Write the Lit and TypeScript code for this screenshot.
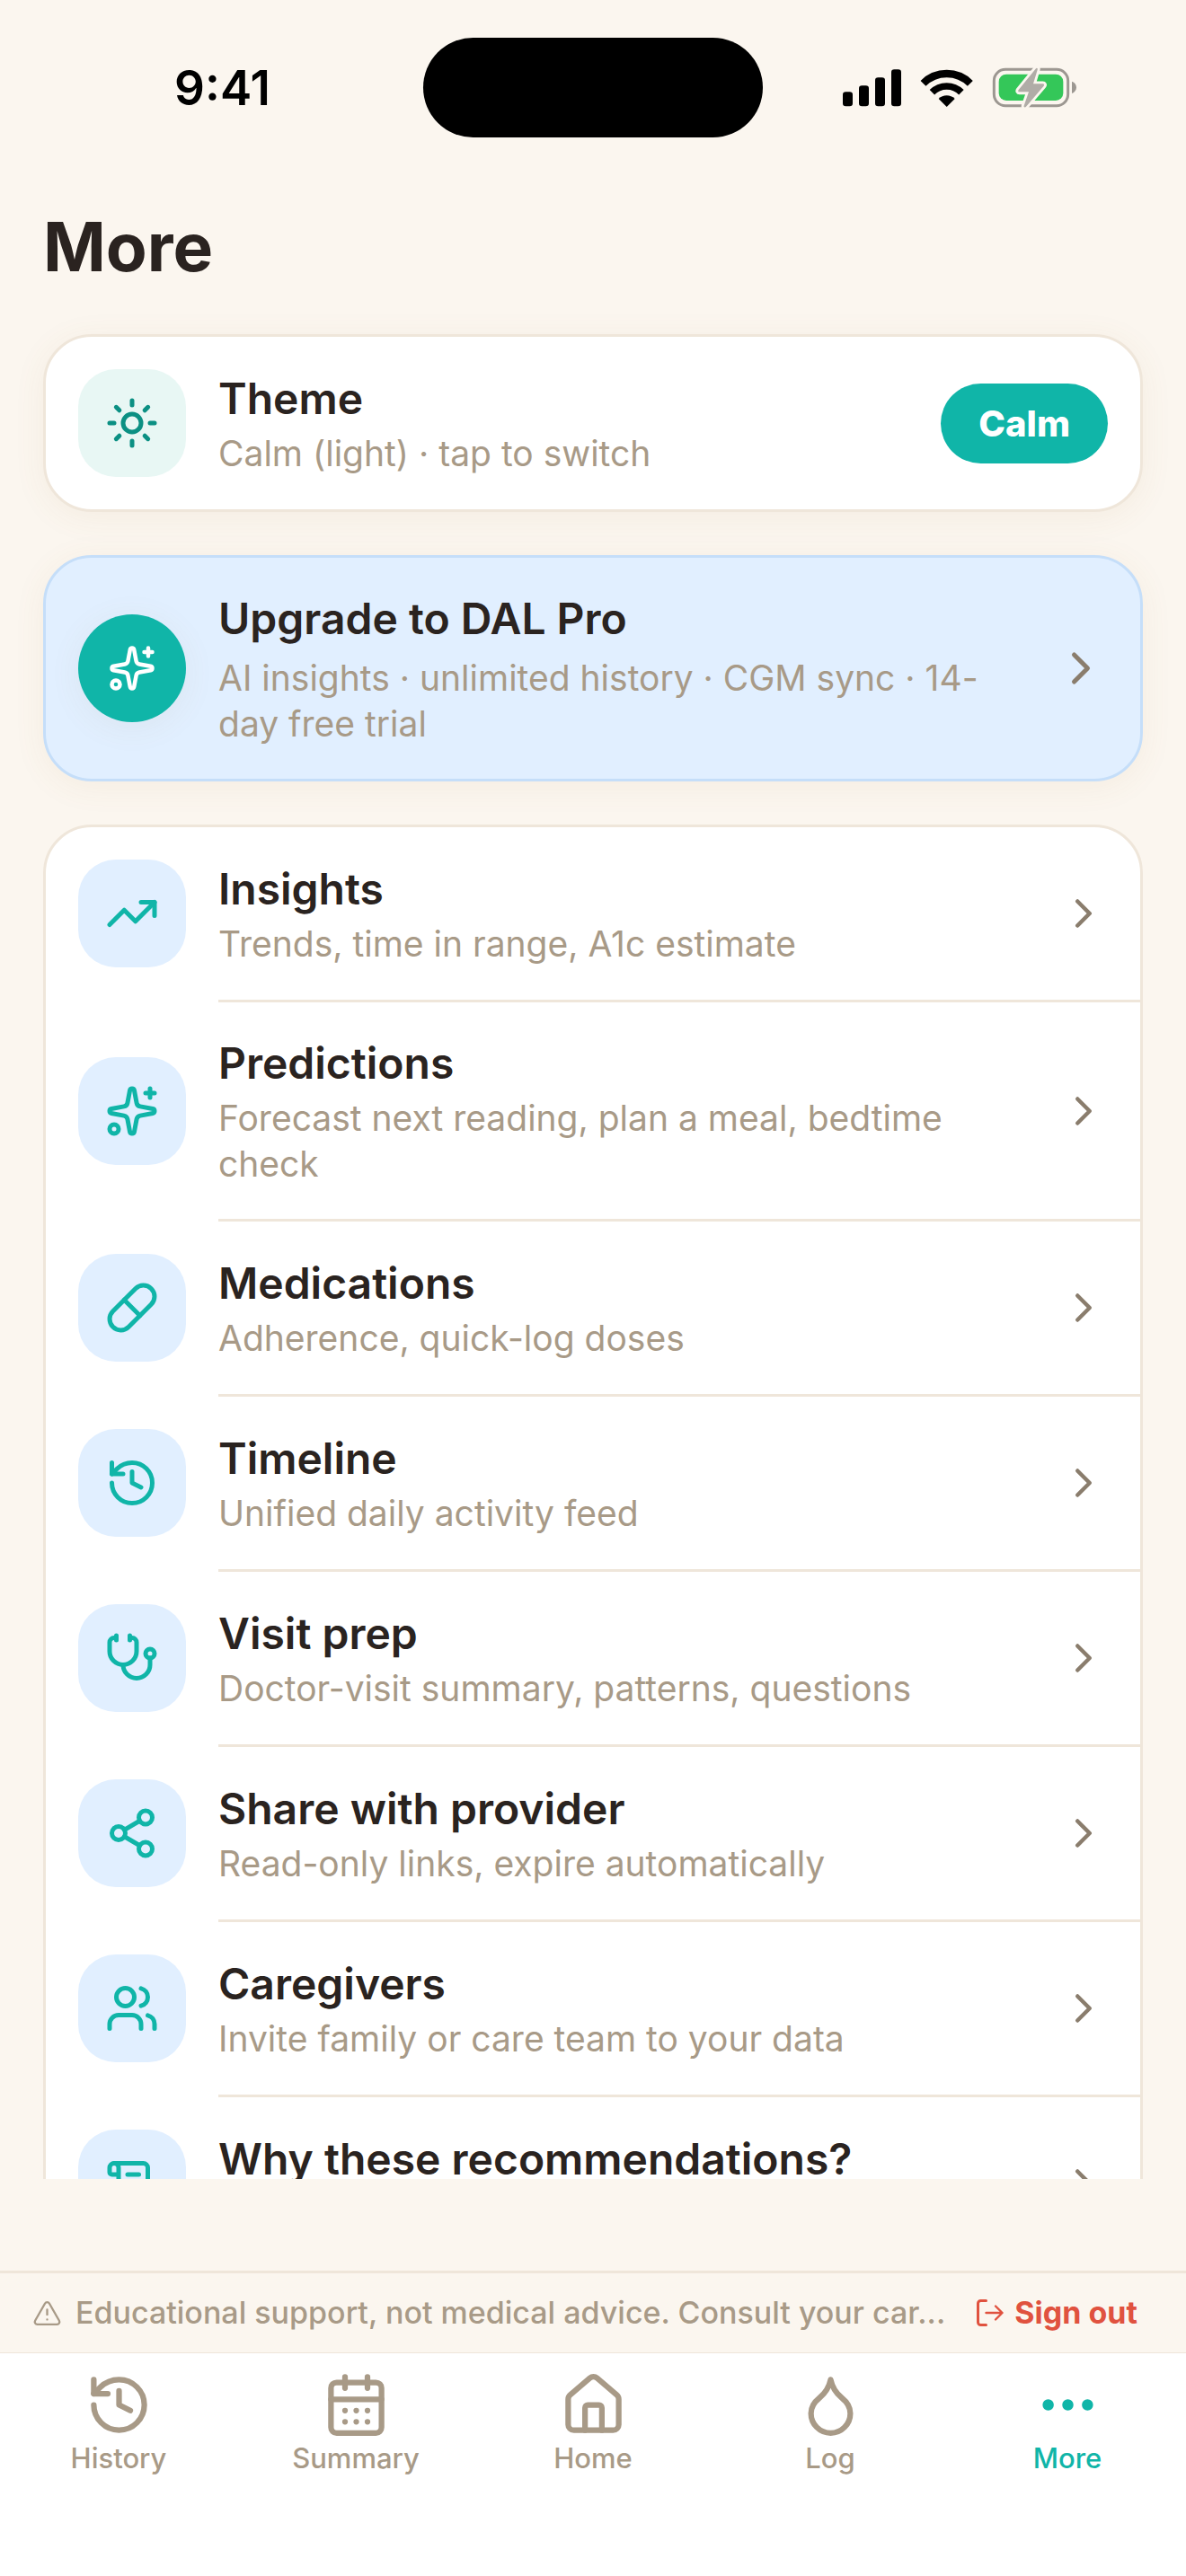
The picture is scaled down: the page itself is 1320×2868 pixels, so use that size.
import { LitElement, html, css, svg, type TemplateResult, type SVGTemplateResult } from "lit";
import { customElement, property, state } from "lit/decorators.js";
import { classMap } from "lit/directives/class-map.js";

const ICONS: Record<string, SVGTemplateResult> = {
  sun: svg`<circle cx="12" cy="12" r="4"/><path d="M12 2v2M12 20v2M4.93 4.93l1.41 1.41M17.66 17.66l1.41 1.41M2 12h2M20 12h2M6.34 17.66l-1.41 1.41M19.07 4.93l-1.41 1.41"/>`,
  sparkles: svg`<path d="M11.017 2.814a1 1 0 0 1 1.966 0l1.051 5.558a2 2 0 0 0 1.594 1.594l5.558 1.051a1 1 0 0 1 0 1.966l-5.558 1.051a2 2 0 0 0-1.594 1.594l-1.051 5.558a1 1 0 0 1-1.966 0l-1.051-5.558a2 2 0 0 0-1.594-1.594l-5.558-1.051a1 1 0 0 1 0-1.966l5.558-1.051a2 2 0 0 0 1.594-1.594z"/><path d="M20 2v4M22 4h-4"/><circle cx="4" cy="20" r="2"/>`,
  trending: svg`<path d="M16 7h6v6"/><path d="m22 7-8.5 8.5-5-5L2 17"/>`,
  pill: svg`<path d="m10.5 20.5 10-10a4.95 4.95 0 1 0-7-7l-10 10a4.95 4.95 0 1 0 7 7Z"/><path d="m8.5 8.5 7 7"/>`,
  history: svg`<path d="M3 12a9 9 0 1 0 9-9 9.75 9.75 0 0 0-6.74 2.74L3 8"/><path d="M3 3v5h5"/><path d="M12 7v5l4 2"/>`,
  stethoscope: svg`<path d="M11 2v2M5 2v2"/><path d="M5 3H4a2 2 0 0 0-2 2v4a6 6 0 0 0 12 0V5a2 2 0 0 0-2-2h-1"/><path d="M8 15a6 6 0 0 0 12 0v-3"/><circle cx="20" cy="10" r="2"/>`,
  share: svg`<circle cx="18" cy="5" r="3"/><circle cx="6" cy="12" r="3"/><circle cx="18" cy="19" r="3"/><path d="M8.59 13.51l6.83 3.98M15.41 6.51l-6.82 3.98"/>`,
  users: svg`<path d="M16 21v-2a4 4 0 0 0-4-4H6a4 4 0 0 0-4 4v2"/><path d="M16 3.128a4 4 0 0 1 0 7.744"/><path d="M22 21v-2a4 4 0 0 0-3-3.87"/><circle cx="9" cy="7" r="4"/>`,
  scroll: svg`<path d="M15 12h-5M15 8h-5"/><path d="M19 17V5a2 2 0 0 0-2-2H4"/><path d="M8 21h12a2 2 0 0 0 2-2v-1a1 1 0 0 0-1-1H11a1 1 0 0 0-1 1v1a2 2 0 1 1-4 0V5a2 2 0 1 0-4 0v2a1 1 0 0 0 1 1h3"/>`,
  chevron: svg`<path d="m9 18 6-6-6-6"/>`,
  calendar: svg`<path d="M8 2v4M16 2v4"/><rect width="18" height="18" x="3" y="4" rx="2"/><path d="M3 10h18M8 14h.01M12 14h.01M16 14h.01M8 18h.01M12 18h.01M16 18h.01"/>`,
  house: svg`<path d="M15 21v-8a1 1 0 0 0-1-1h-4a1 1 0 0 0-1 1v8"/><path d="M3 10a2 2 0 0 1 .709-1.528l7-6a2 2 0 0 1 2.582 0l7 6A2 2 0 0 1 21 10v9a2 2 0 0 1-2 2H5a2 2 0 0 1-2-2z"/>`,
  droplet: svg`<path d="M12 22a7 7 0 0 0 7-7c0-2-1-3.9-3-5.5s-3.5-4-4-6.5c-.5 2.5-2 4.9-4 6.5C6 11.1 5 13 5 15a7 7 0 0 0 7 7z"/>`,
  dots: svg`<circle cx="12" cy="12" r="1"/><circle cx="19" cy="12" r="1"/><circle cx="5" cy="12" r="1"/>`,
  alert: svg`<g stroke-width="1.7"><path d="m21.73 18-8-14a2 2 0 0 0-3.48 0l-8 14A2 2 0 0 0 4 21h16a2 2 0 0 0 1.73-3"/><path d="M12 9v4M12 17h.01"/></g>`,
  logout: svg`<path d="M9 21H5a2 2 0 0 1-2-2V5a2 2 0 0 1 2-2h4"/><path stroke-width="1.6" d="m16 17 5-5-5-5M21 12H9"/>`,
};

@customElement("line-icon")
class LineIcon extends LitElement {
  @property() name = "";

  static styles = css`
    :host {
      display: block;
      flex: none;
    }
    .glyph {
      display: block;
      width: 100%;
      height: 100%;
      fill: none;
      stroke: currentColor;
      stroke-width: 2;
      stroke-linecap: round;
      stroke-linejoin: round;
    }
  `;

  render() {
    return html`<svg class="glyph" viewBox="0 0 24 24" aria-hidden="true">${ICONS[this.name]}</svg>`;
  }
}

@customElement("status-bar")
class StatusBar extends LitElement {
  static styles = css`
    :host {
      display: block;
    }
    .bar {
      display: grid;
      grid-template-columns: 1fr 378px 1fr;
      align-items: center;
      padding: 42px 0 33px;
      color: #000;
    }
    .time {
      font-size: 53px;
      line-height: 64px;
      font-weight: 600;
      text-align: center;
      padding-left: 24px;
    }
    .island {
      height: 111px;
      border-radius: 56px;
      background: #000;
    }
    .signals {
      display: flex;
      justify-content: flex-end;
      align-items: center;
      gap: 21px;
      padding-right: 121px;
    }
    .cell {
      width: 65px;
      height: 42px;
    }
    .wifi {
      width: 59px;
      height: 44px;
    }
    .battery {
      width: 95px;
      height: 47px;
    }
  `;

  render() {
    return html`
      <div class="bar">
        <div class="time">9:41</div>
        <div class="island"></div>
        <div class="signals">
          <svg class="cell" viewBox="51 107 195 126" aria-hidden="true">
            <rect x="51" y="183" width="33" height="48" rx="10" />
            <rect x="105" y="162" width="33" height="69" rx="10" />
            <rect x="159" y="135" width="33" height="96" rx="10" />
            <rect x="213" y="108" width="33" height="123" rx="10" />
          </svg>
          <svg class="wifi" viewBox="312 102 177 132" aria-hidden="true">
            <g fill="none" stroke="#000">
              <path stroke-width="25" d="M322.5 152.5a111 111 0 0 1 157 0" />
              <path stroke-width="23" d="M352.2 182.2a69 69 0 0 1 97.6 0" />
            </g>
            <path d="M401 231l-27-27a38 38 0 0 1 54 0z" />
          </svg>
          <svg class="battery" viewBox="552 99 285 141" aria-hidden="true">
            <rect x="559" y="109" width="247" height="121" rx="38" fill="none" stroke="#9c9791" stroke-width="9" />
            <rect x="575" y="125" width="215" height="88" rx="25" fill="#34c759" />
            <path d="M819 149c9 3 15 11 15 20s-6 17-15 20z" fill="#9c9791" />
            <path
              d="M699 106l-58 71c-3 4-1 7 3 7h31l-16 46c-2 5 4 7 7 3l59-69c3-4 1-7-3-7h-32l14-47c2-6-3-8-5-4z"
              fill="#b0aca7"
              stroke="#fbf6ef"
              stroke-width="17"
              stroke-linejoin="round"
              paint-order="stroke"
            />
          </svg>
        </div>
      </div>
    `;
  }
}

interface MenuItem {
  icon: string;
  title: string;
  note?: string;
  slug: string;
}

const MENU: MenuItem[] = [
  { icon: "trending", title: "Insights", note: "Trends, time in range, A1c estimate", slug: "insights" },
  { icon: "sparkles", title: "Predictions", note: "Forecast next reading, plan a meal, bedtime check", slug: "predictions" },
  { icon: "pill", title: "Medications", note: "Adherence, quick-log doses", slug: "medications" },
  { icon: "history", title: "Timeline", note: "Unified daily activity feed", slug: "timeline" },
  { icon: "stethoscope", title: "Visit prep", note: "Doctor-visit summary, patterns, questions", slug: "visit-prep" },
  { icon: "share", title: "Share with provider", note: "Read-only links, expire automatically", slug: "share" },
  { icon: "users", title: "Caregivers", note: "Invite family or care team to your data", slug: "caregivers" },
  { icon: "scroll", title: "Why these recommendations?", slug: "why" },
];

const TABS = [
  { icon: "history", label: "History" },
  { icon: "calendar", label: "Summary" },
  { icon: "house", label: "Home" },
  { icon: "droplet", label: "Log" },
  { icon: "dots", label: "More" },
];

@customElement("app-root")
class AppRoot extends LitElement {
  @state() private activeTab = "More";

  static styles = css`
    :host {
      display: block;
      --ink: #2a2320;
      --muted: #a89a87;
      --line: #efe6da;
      --paper: #fbf6ef;
      --teal: #10b5a8;
      --sky: #e1efff;
      font-family: Inter, "Open Sans", "Liberation Sans", sans-serif;
      color: var(--ink);
    }
    .screen {
      display: flex;
      flex-direction: column;
      height: 100vh;
      background: var(--paper);
    }
    .heading {
      margin: 0;
      padding: 41px 48px 49px;
      font-size: 75px;
      line-height: 96px;
      font-weight: 700;
    }
    /* Clips the list at the bottom only, so card shadows stay visible above. */
    .viewport {
      flex: 1;
      min-height: 0;
      margin-bottom: 102px;
      clip-path: inset(-60px 0 0 0);
    }
    .stack {
      display: flex;
      flex-direction: column;
      gap: 48px;
      padding: 0 48px;
    }
    .card {
      border: 3px solid var(--line);
      border-radius: 54px;
      background: #fff;
    }
    .raised {
      box-shadow: 0 6px 36px rgba(150, 120, 60, 0.07);
    }
    .upgrade {
      border-color: #c5def9;
      background: var(--sky);
    }
    .row {
      display: flex;
      align-items: center;
      gap: 36px;
      padding: 36px;
      color: inherit;
      text-decoration: none;
    }
    .tile {
      display: grid;
      place-items: center;
      flex: none;
      width: 120px;
      height: 120px;
      border-radius: 42px;
      background: var(--sky);
      color: var(--teal);
    }
    .tile-theme {
      background: #e8f7f4;
      color: #0b9083;
    }
    .tile-round {
      border-radius: 60px;
      background: var(--teal);
      color: #fff;
      box-shadow: 0 6px 36px rgba(150, 120, 60, 0.07);
    }
    .icon {
      width: 60px;
      height: 60px;
    }
    .icon-small {
      width: 54px;
      height: 54px;
    }
    .text {
      display: flex;
      flex-direction: column;
      gap: 3px;
      flex: 1;
      min-width: 0;
      min-height: 118px;
    }
    .title {
      font-size: 48px;
      line-height: 64px;
      font-weight: 600;
    }
    .note {
      font-size: 39px;
      line-height: 51px;
      color: var(--muted);
    }
    .upgrade .text {
      gap: 8px;
    }
    .chevron {
      color: #8a7d6d;
    }
    .switch {
      flex: none;
      border: 0;
      border-radius: 45px;
      padding: 21px 42px;
      background: var(--teal);
      color: #fff;
      font: inherit;
      font-size: 40px;
      line-height: 47px;
      font-weight: 800;
    }
    .menu {
      margin: 0;
      padding: 0;
      list-style: none;
    }
    .rule {
      height: 3px;
      margin-left: 192px;
      background: var(--line);
    }
    .notice {
      display: flex;
      align-items: center;
      padding: 0 54px 0 36px;
      height: 88px;
      border-top: 3px solid var(--line);
      font-size: 34px;
      line-height: 42px;
      color: var(--muted);
    }
    .notice-icon {
      width: 33px;
      height: 33px;
      margin-right: 15px;
    }
    .notice-text {
      flex: 1;
      min-width: 0;
      margin: 0 24px 0 0;
      font-weight: 500;
      white-space: nowrap;
      overflow: hidden;
      text-overflow: ellipsis;
    }
    .signout {
      display: flex;
      align-items: center;
      gap: 9px;
      flex: none;
      border: 0;
      padding: 0;
      background: none;
      color: #e0523f;
      font: inherit;
      font-weight: 700;
    }
    .signout-icon {
      width: 36px;
      height: 36px;
    }
    .tabs {
      display: grid;
      grid-template-columns: repeat(5, 1fr);
      padding: 20px 0 113px;
      border-top: 1px solid var(--line);
      background: #fff;
    }
    .tab {
      display: flex;
      flex-direction: column;
      align-items: center;
      gap: 4px;
      font-size: 31px;
      line-height: 36px;
      font-weight: 500;
      color: var(--muted);
      text-decoration: none;
    }
    .tab-active {
      color: var(--teal);
    }
    .tab-icon {
      width: 75px;
      height: 75px;
    }
  `;

  private menuRow(item: MenuItem, last: boolean): TemplateResult {
    return html`
      <li class="item">
        <a class="row" href="#${item.slug}">
          <span class="tile"><line-icon class="icon" name=${item.icon}></line-icon></span>
          <span class="text">
            <span class="title">${item.title}</span>
            ${item.note ? html`<span class="note">${item.note}</span>` : null}
          </span>
          <line-icon class="icon-small chevron" name="chevron"></line-icon>
        </a>
        ${last ? null : html`<div class="rule"></div>`}
      </li>
    `;
  }

  render() {
    return html`
      <div class="screen">
        <status-bar></status-bar>
        <h1 class="heading">More</h1>
        <main class="viewport">
          <div class="stack">
            <section class="card raised">
              <div class="row">
                <span class="tile tile-theme"><line-icon class="icon" name="sun"></line-icon></span>
                <span class="text">
                  <span class="title" id="theme-label">Theme</span>
                  <span class="note">Calm (light) · tap to switch</span>
                </span>
                <button class="switch" type="button" aria-describedby="theme-label">Calm</button>
              </div>
            </section>
            <section class="card raised upgrade">
              <a class="row" href="#upgrade">
                <span class="tile tile-round"><line-icon class="icon-small" name="sparkles"></line-icon></span>
                <span class="text">
                  <span class="title">Upgrade to DAL Pro</span>
                  <span class="note">AI insights · unlimited history · CGM sync · 14-day free trial</span>
                </span>
                <line-icon class="icon chevron" name="chevron"></line-icon>
              </a>
            </section>
            <nav class="card">
              <ul class="menu">
                ${MENU.map((item, i) => this.menuRow(item, i === MENU.length - 1))}
              </ul>
            </nav>
          </div>
        </main>
        <footer class="notice">
          <line-icon class="notice-icon" name="alert"></line-icon>
          <p class="notice-text">Educational support, not medical advice. Consult your car...</p>
          <button class="signout" type="button">
            <line-icon class="signout-icon" name="logout"></line-icon>Sign out
          </button>
        </footer>
        <nav class="tabs">
          ${TABS.map(
            (tab) => html`
              <a
                class=${classMap({ tab: true, "tab-active": tab.label === this.activeTab })}
                href="#${tab.label.toLowerCase()}"
                @click=${() => (this.activeTab = tab.label)}
              >
                <line-icon class="tab-icon" name=${tab.icon}></line-icon>
                <span>${tab.label}</span>
              </a>
            `,
          )}
        </nav>
      </div>
    `;
  }
}
